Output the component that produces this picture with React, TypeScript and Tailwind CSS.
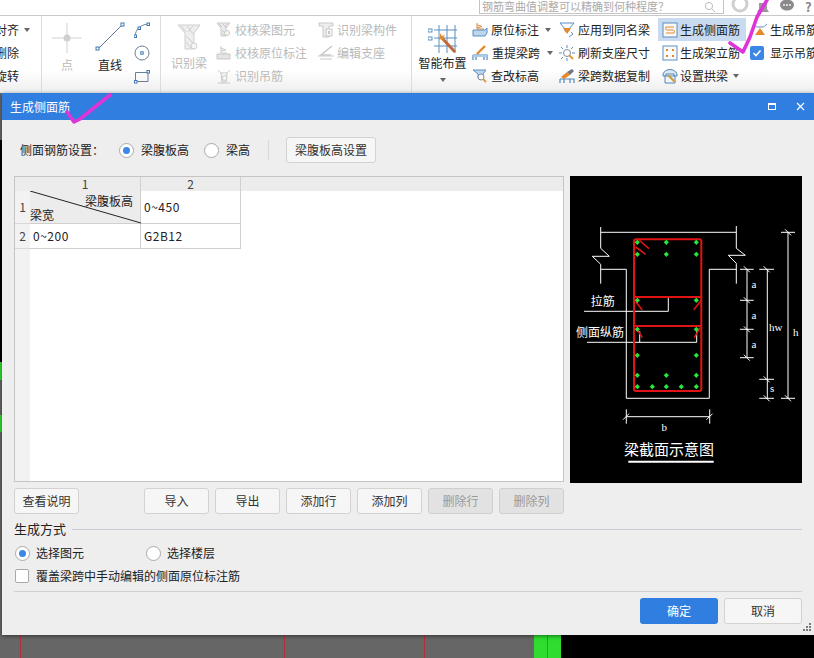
import type { ReactNode } from 'react'

function Caret({ className = '' }: { className?: string }) {
  return <span className={`inline-block w-0 h-0 border-x-[3.5px] border-x-transparent border-t-[4px] border-t-[#666] ${className}`} />
}

function Svg({ children, size = 16 }: { children: ReactNode; size?: number }) {
  return (
    <svg width={size} height={size} viewBox="0 0 16 16" fill="none" className="shrink-0">
      {children}
    </svg>
  )
}

// muted ribbon icons
const muted = '#c9c9c9'
const IconCheckBeam = () => (
  <Svg>
    <path d="M1 1h13l-4 5v8H5V6z" stroke={muted} fill="#ececec" />
    <path d="M3 2l3 3M7 2l3 4M11 2l-2 3M6 8l3 3M6 11l3 3" stroke={muted} />
    <circle cx="11" cy="11" r="2.5" stroke={muted} fill="#f6f6f6" />
  </Svg>
)
const IconCheckMark = () => (
  <Svg>
    <path d="M5 1v7h6M5 3l5 2-5 1" stroke={muted} />
    <path d="M1 9h13v5H1z" fill="#e4e4e4" stroke={muted} />
  </Svg>
)
const IconHanger = () => (
  <Svg>
    <path d="M2 2l3 3h6l3-3M5 5l1 9h4l1-9" stroke={muted} />
    <circle cx="8.5" cy="10" r="2.5" stroke={muted} fill="#f4f4f4" />
    <path d="M2 15h12" stroke={muted} />
  </Svg>
)
const IconBeamPart = () => (
  <Svg>
    <path d="M1 1h14v3h-4v11H5V4H1z" stroke={muted} fill="#eee" />
    <path d="M8 7h6v7H8z" stroke={muted} fill="#f6f6f6" />
    <path d="M10 9h2v3h-2z" fill={muted} />
  </Svg>
)
const IconSupport = () => (
  <Svg>
    <path d="M14 1L3 10h10" stroke={muted} strokeWidth="1.6" />
    <path d="M0 11h16M2 14h12" stroke={muted} />
  </Svg>
)

const IconOrig = () => (
  <Svg>
    <path d="M5 1v6h7M5 3l5 1.5L5 6" stroke="#d98b3a" />
    <path d="M1 8h12l2-2v5l-2 3H1z" fill="#bcd6ee" stroke="#5b8fc0" />
  </Svg>
)
const IconRespan = () => (
  <Svg>
    <path d="M13 1L5 9" stroke="#e58a2c" strokeWidth="2.4" />
    <path d="M1 10h14v5M1 10v5M4 10v5M12 10v5" stroke="#4f86bb" strokeWidth="1.2" />
    <path d="M1 10h14v2H1z" fill="#a9cbe8" />
  </Svg>
)
const IconElev = () => (
  <Svg>
    <path d="M1 2h13l-3 4v4H6V6z" fill="#bcd6ee" stroke="#5b8fc0" />
    <circle cx="9" cy="9" r="3" fill="#fff" stroke="#7a8fa5" />
    <path d="M11 11l3 3" stroke="#e0a030" strokeWidth="2" />
  </Svg>
)
const IconApply = () => (
  <Svg>
    <path d="M1 1h14l-5 6v2H6V7z" stroke="#5b8fc0" fill="#f7fbff" />
    <path d="M4 6h8l-4 6z" fill="#e58a2c" />
    <path d="M12 10l2 2-4 3" stroke="#5b8fc0" />
  </Svg>
)
const IconRefresh = () => (
  <Svg>
    <path d="M8 0v3M8 13v3M0 8h3M13 8h3M2 2l2 2M14 2l-2 2M2 14l2-2" stroke="#5b8fc0" />
    <circle cx="8" cy="8" r="3.5" fill="#fff" stroke="#7a8fa5" />
    <path d="M10 10l4 4" stroke="#e0a030" strokeWidth="2" />
  </Svg>
)
const IconCopy = () => (
  <Svg>
    <path d="M1 11h14v4M1 11v4M5 11v4M11 11v4" stroke="#4f86bb" strokeWidth="1.2" />
    <path d="M2 9l6-5 3 3-6 4z" fill="#e58a2c" />
    <path d="M8 4l5-3 2 2-4 4z" fill="#6b7785" />
  </Svg>
)
const IconSide = () => (
  <Svg>
    <rect x="1" y="1" width="14" height="14" fill="#f8f8f8" stroke="#5b8fc0" />
    <path d="M4 5h8M4 11h8M4 5c-1 2 0 3 1 3h6c1 0 2 1 1 3" stroke="#e58a2c" />
  </Svg>
)
const IconErect = () => (
  <Svg>
    <rect x="1" y="1" width="14" height="14" fill="#fbfbfb" stroke="#5b8fc0" />
    <path d="M4 4h2v2H4zM10 4h2v2h-2zM4 10h2v2H4zM10 10h2v2h-2z" fill="#e58a2c" />
  </Svg>
)
const IconArch = () => (
  <Svg>
    <path d="M1 6c2-6 12-6 14 0v2h-3V6H4v2H1z" fill="#dbe9f5" stroke="#4f86bb" />
    <path d="M3 8h10v7H3z" fill="#f3f6f9" stroke="#4f86bb" />
    <path d="M6 7l7 7" stroke="#c9a24e" strokeWidth="2.4" />
  </Svg>
)
const IconHangGen = () => (
  <Svg>
    <path d="M1 2c2 2 3 3 5 3h4c2 0 3-1 5-3" stroke="#5b8fc0" />
    <path d="M3 13l5-7 5 7z" fill="#e58a2c" />
  </Svg>
)

function RibbonRow({
  icon,
  label,
  grey,
  caret,
  iconGap = 'gap-[5px]',
}: {
  icon: ReactNode
  label: string
  grey?: boolean
  caret?: boolean
  iconGap?: string
}) {
  return (
    <div className={`flex items-center h-[23px] whitespace-nowrap ${iconGap} ${grey ? 'text-[#b9b9b9]' : 'text-[#222]'}`}>
      {icon}
      <span>{label}</span>
      {caret && <Caret className="ml-[3px]" />}
    </div>
  )
}

function Radio({ on }: { on?: boolean }) {
  return (
    <span className="w-[15px] h-[15px] rounded-full border border-[#a9a9a9] bg-white flex items-center justify-center shrink-0">
      {on && <span className="w-[7px] h-[7px] rounded-full bg-[#3c87e6]" />}
    </span>
  )
}

function Btn({ children, off, className = 'w-[65px]' }: { children: ReactNode; off?: boolean; className?: string }) {
  return (
    <div
      className={`h-[26px] rounded-[3px] border flex items-center justify-center text-xs ${className} ${
        off ? 'bg-[#e2e2e2] border-[#cfcfcf] text-[#999]' : 'bg-[#f6f6f6] border-[#d2d2d2] text-[#333]'
      }`}
    >
      {children}
    </div>
  )
}

function BeamDiagram() {
  const dots = [
    [67.3, 66.3], [96.3, 66.3], [126.3, 66.3], [67.3, 78.3], [96.3, 78.3], [126.3, 78.3],
    [67.3, 124.3], [126.3, 124.3], [67.3, 153.3], [126.3, 153.3], [67.3, 179.3], [126.3, 179.3],
    [67.3, 199.3], [96.3, 199.3], [126.3, 199.3], [67.3, 210.7], [82.3, 210.7], [96.3, 210.7],
    [111.3, 210.7], [126.3, 210.7],
  ]
  const ticks = [
    [170, 183.7, 93.3], [170, 183.7, 124.3], [170, 183.7, 153.3], [170, 183.7, 181.7],
    [189.3, 204, 93.3], [189.3, 204, 203.3], [189.3, 204, 222.3],
    [211, 225, 56.3], [211, 225, 222.3],
  ]
  return (
    <svg width="232" height="307" viewBox="0 0 232 307" className="block bg-black shrink-0">
      <g stroke="#fff" strokeWidth="1" fill="none">
        <path d="M30.7 56.3H166.3" />
        <path d="M30.7 51V72.3L39.3 80.3H22.3L30.7 88.3V107.7" />
        <path d="M166.3 50V72.3L175.3 79.3H158.3L166.3 87.3V107.7" />
        <path d="M166.3 93.3H139.3V222.3H56.3V93.3H30.7" />
        <path d="M14 135.3H98.3V121" />
        <path d="M17 166.3H126.7V155M69.7 166.3V155" />
        <path d="M177 93.3V181.7M197.3 93.3V222.3M218 56.3V222.3" />
        {ticks.map(([a, b, y]) => (
          <path key={`${a}-${y}`} d={`M${a} ${y}H${b}M${(a + b) / 2 - 3} ${y - 3}L${(a + b) / 2 + 3} ${y + 3}`} />
        ))}
        <path d="M56.3 233.3V247.7M139.7 233.3V247.7M56.3 240.7H139.7M53 243.7L59 237.7M136.5 243.7L142.5 237.7" />
      </g>
      <g stroke="#e01414" fill="none">
        <rect x="64" y="63.3" width="67.3" height="151.7" rx="2" strokeWidth="2" />
        <path d="M64 121H131.3M64 150H131.3" strokeWidth="2" />
        <path d="M69 64L79 72.7M65.7 71L75.7 78.3M65.7 125.7L72.3 134M131.3 124.3L123.7 133.7M66.7 152.3L72.3 161.7M130 151.7L124.3 161.7" strokeWidth="1.6" />
      </g>
      {dots.map(([x, y]) => (
        <path key={`${x}-${y}`} d={`M${x} ${y - 2.6}L${x + 2.6} ${y}L${x} ${y + 2.6}L${x - 2.6} ${y}Z`} fill="#27e63c" />
      ))}
      <g fill="#fff" fontSize="12">
        <text x="20.7" y="130">拉筋</text>
        <text x="6" y="161">侧面纵筋</text>
        <text x="54" y="279" fontSize="15">梁截面示意图</text>
      </g>
      <g fill="#fff" className="[font-family:'Liberation_Serif',serif]" fontSize="11">
        <text x="181.5" y="112">a</text>
        <text x="181.5" y="143">a</text>
        <text x="181.5" y="172">a</text>
        <text x="199" y="155">hw</text>
        <text x="200" y="216">s</text>
        <text x="223" y="160">h</text>
        <text x="91.5" y="255">b</text>
      </g>
      <path d="M58.3 285.7H143.7" stroke="#fff" strokeWidth="2" />
    </svg>
  )
}

export default function App() {
  return (
    <div className="relative w-[814px] h-[658px] overflow-hidden bg-[#666] text-xs [font-family:'Noto_Sans_CJK_SC','Liberation_Sans',sans-serif]">
      {/* top strip */}
      <div className="h-[16px] bg-white border-b border-[#c9c9c9] flex items-start justify-end">
        <div className="w-[245px] h-[14px] border border-t-0 border-[#c4c4c4] flex items-center justify-between pl-[2px] pr-[3px] text-[11px] text-[#aaa] mr-[90px] leading-none overflow-hidden">
          <span className="whitespace-nowrap">钢筋弯曲值调整可以精确到何种程度？</span>
          <svg width="12" height="12" viewBox="0 0 12 12" fill="none" stroke="#bbb" className="mr-[4px]">
            <circle cx="5" cy="5" r="3.6" />
            <path d="M8 8l3 3" />
          </svg>
        </div>
      </div>
      <div className="absolute top-0 left-[731px] flex items-start gap-[5px]">
        <svg width="78" height="14" viewBox="0 0 78 14">
          <circle cx="9" cy="4" r="7" fill="none" stroke="#cfcfcf" strokeWidth="3" />
          <path d="M26 12h12l-2-3V3h-8v6z" fill="#9a9a9a" />
          <ellipse cx="56" cy="5" rx="7" ry="5.5" fill="#8a8a8a" />
          <circle cx="53" cy="5" r="0.9" fill="#fff" />
          <circle cx="56" cy="5" r="0.9" fill="#fff" />
          <circle cx="59" cy="5" r="0.9" fill="#fff" />
        </svg>
        <span className="text-[13px] leading-[14px] text-[#888] font-bold -ml-[9px]">?</span>
      </div>

      {/* ribbon */}
      <div className="h-[77px] bg-gradient-to-b from-white from-70% to-[#eeeeee] flex overflow-hidden">
        <div className="w-[42px] shrink-0 border-r border-[#dcdcdc] pt-[2px] pl-0 overflow-hidden text-[#222]">
          <div className="h-[23px] flex items-center whitespace-nowrap -ml-[5px]">
            对齐
            <Caret className="ml-[5px]" />
          </div>
          <div className="h-[23px] flex items-center whitespace-nowrap -ml-[5px]">删除</div>
          <div className="h-[23px] flex items-center whitespace-nowrap -ml-[5px]">旋转</div>
        </div>

        <div className="w-[119px] shrink-0 border-r border-[#dcdcdc] flex">
          <div className="w-[48px] pl-[2px] pt-[6px] flex flex-col items-center text-[#b9b9b9]">
            <svg width="32" height="32" viewBox="0 0 32 32" fill="none" stroke="#d2d2d2">
              <path d="M16 1v30M1 16h30" />
              <circle cx="16" cy="16" r="3.5" fill="#cfcfcf" stroke="none" />
            </svg>
            <span className="mt-[3px]">点</span>
          </div>
          <div className="w-[40px] pt-[6px] flex flex-col items-center text-[#222]">
            <svg width="30" height="30" viewBox="0 0 30 30" fill="none" stroke="#5d7893">
              <path d="M3 27L27 3" />
              <rect x="1" y="25" width="3" height="3" fill="#fff" stroke="#3f78b0" />
              <rect x="26" y="1" width="3" height="3" fill="#fff" stroke="#3f78b0" />
            </svg>
            <span className="mt-[5px]">直线</span>
          </div>
          <div className="pt-[2px] pl-[4px] flex flex-col">
            <div className="h-[23px] flex items-center">
              <Svg>
                <path d="M1 14C2 7 6 3 14 2" stroke="#6d7f92" />
                <rect x="0" y="13" width="2.5" height="2.5" fill="#fff" stroke="#3f78b0" />
                <rect x="4" y="5" width="2.5" height="2.5" fill="#fff" stroke="#3f78b0" />
                <rect x="13" y="1" width="2.5" height="2.5" fill="#fff" stroke="#3f78b0" />
              </Svg>
            </div>
            <div className="h-[23px] flex items-center">
              <Svg>
                <circle cx="8" cy="8" r="7" stroke="#6d7f92" />
                <rect x="6.8" y="6.8" width="2.4" height="2.4" fill="#fff" stroke="#3f78b0" />
              </Svg>
            </div>
            <div className="h-[23px] flex items-center">
              <Svg>
                <path d="M1.5 4.5H14V13.5H1.5z" stroke="#6d7f92" />
                <rect x="0.5" y="12.5" width="2.5" height="2.5" fill="#fff" stroke="#3f78b0" />
                <rect x="13" y="2.5" width="2.5" height="2.5" fill="#fff" stroke="#3f78b0" />
              </Svg>
            </div>
          </div>
        </div>

        <div className="w-[251px] shrink-0 border-r border-[#dcdcdc] flex">
          <div className="w-[54px] pl-[2px] pt-[8px] flex flex-col items-center text-[#b9b9b9]">
            <svg width="24" height="28" viewBox="0 0 24 28" fill="none" stroke="#cfcfcf">
              <path d="M1 1h22l-6 8v16H8V9z" fill="#eeeeee" />
              <path d="M4 2l5 6M10 2l6 8M16 2l-5 6M9 12l7 7M9 18l5 6" />
              <circle cx="17" cy="22" r="3" fill="#f6f6f6" />
            </svg>
            <span className="mt-[3px] whitespace-nowrap">识别梁</span>
          </div>
          <div className="w-[103px] pl-[1px] pt-[2px] flex flex-col">
            <RibbonRow grey icon={<IconCheckBeam />} label="校核梁图元" iconGap="gap-[3px]" />
            <RibbonRow grey icon={<IconCheckMark />} label="校核原位标注" iconGap="gap-[3px]" />
            <RibbonRow grey icon={<IconHanger />} label="识别吊筋" iconGap="gap-[3px]" />
          </div>
          <div className="pt-[2px] flex flex-col">
            <RibbonRow grey icon={<IconBeamPart />} label="识别梁构件" iconGap="gap-[3px]" />
            <RibbonRow grey icon={<IconSupport />} label="编辑支座" iconGap="gap-[3px]" />
          </div>
        </div>

        <div className="flex shrink-0 text-[#222]">
          <div className="w-[60px] pl-[1px] pt-[8px] flex flex-col items-center">
            <svg width="30" height="30" viewBox="0 0 30 30" fill="none">
              <path d="M6 6H29M6 14H29M6 22H29M11 1V29M19 1V29M27 1V29" stroke="#5b8fc0" />
              <rect x="0" y="5" width="4" height="3" stroke="#5b8fc0" fill="#fff" />
              <rect x="0" y="13" width="4" height="3" stroke="#5b8fc0" fill="#fff" />
              <path d="M13 13L27 28" stroke="#c06a3a" strokeWidth="3" />
              <path d="M12 9l2 3 3-1-2 3 1 3-3-2-2 1 1-3z" fill="#e58a2c" />
            </svg>
            <span className="mt-[1px] whitespace-nowrap">智能布置</span>
            <Caret className="mt-[7px]" />
          </div>
          <div className="w-[87px] pt-[2px] flex flex-col">
            <RibbonRow icon={<IconOrig />} label="原位标注" iconGap="gap-[3px]" caret />
            <RibbonRow icon={<IconRespan />} label="重提梁跨" iconGap="gap-[4px]" caret />
            <RibbonRow icon={<IconElev />} label="查改标高" iconGap="gap-[3px]" />
          </div>
          <div className="w-[99px] pt-[2px] flex flex-col">
            <RibbonRow icon={<IconApply />} label="应用到同名梁" iconGap="gap-[3px]" />
            <RibbonRow icon={<IconRefresh />} label="刷新支座尺寸" iconGap="gap-[3px]" />
            <RibbonRow icon={<IconCopy />} label="梁跨数据复制" iconGap="gap-[3px]" />
          </div>
          <div className="w-[92px] pt-[2px] flex flex-col">
            <div className="w-[88px] h-[23px] bg-[#c9dbf0] pl-[4px] flex items-center gap-[2px] whitespace-nowrap">
              <IconSide />
              <span>生成侧面筋</span>
            </div>
            <div className="pl-[4px]">
              <RibbonRow icon={<IconErect />} label="生成架立筋" iconGap="gap-[2px]" />
              <RibbonRow icon={<IconArch />} label="设置拱梁" iconGap="gap-[2px]" caret />
            </div>
          </div>
          <div className="pt-[2px] flex flex-col">
            <div className="pl-[2px]">
              <RibbonRow icon={<IconHangGen />} label="生成吊筋" iconGap="gap-[2px]" />
            </div>
            <div className="flex items-center h-[23px] gap-[6px] whitespace-nowrap">
              <span className="w-[14px] h-[14px] rounded-[2px] bg-[#3c87e6] flex items-center justify-center">
                <svg width="10" height="10" viewBox="0 0 10 10" fill="none" stroke="#fff" strokeWidth="1.6">
                  <path d="M1.5 5l2.5 2.5 4.5-5" />
                </svg>
              </span>
              <span>显示吊筋</span>
            </div>
          </div>
        </div>
      </div>

      {/* drawing canvas behind the dialog */}
      <div className="absolute left-[534px] right-0 top-[630px] bottom-0 flex">
        <div className="w-[27px] bg-[#2fdc2f]" />
        <div className="flex-1 bg-black" />
      </div>
      <div className="absolute left-[20px] top-[630px] bottom-0 w-px bg-[#b03040]" />
      <div className="absolute left-[284px] top-[630px] bottom-0 w-px bg-[#b03040]" />
      <div className="absolute left-[424px] top-[630px] bottom-0 w-px bg-[#b03040]" />
      <div className="absolute left-[547px] top-[630px] bottom-0 w-px bg-[#b06020]" />
      <div className="absolute left-0 w-[2px] top-[140px] h-[222px] bg-black" />
      <div className="absolute left-0 w-[2px] top-[362px] h-[18px] bg-[#2fdc2f]" />
      <div className="absolute left-0 w-[2px] top-[415px] h-[17px] bg-[#2fdc2f]" />

      {/* dialog */}
      <div className="absolute left-[2px] top-[93px] w-[812px] h-[542px] bg-[#eeeeee] shadow-[0_1px_4px_rgba(0,0,0,0.5)] flex flex-col">
        <div className="h-[27px] shrink-0 bg-[#2f7ee0] flex items-center justify-between pl-[8px] pr-[9px] text-white">
          <span>生成侧面筋</span>
          <div className="flex items-center gap-[20px]">
            <span className="w-[8px] h-[7px] border border-white border-t-2" />
            <svg width="9" height="9" viewBox="0 0 9 9" stroke="#fff" strokeWidth="1.2">
              <path d="M1 1l7 7M8 1l-7 7" />
            </svg>
          </div>
        </div>

        <div className="flex-1 pl-[12px] pr-[12px] relative">
          <div className="h-[56px] flex items-center pl-[6px] pt-[4px] text-[#222]">
            <span className="w-[99px]">侧面钢筋设置：</span>
            <Radio on />
            <span className="ml-[7px] w-[56px]">梁腹板高</span>
            <span className="ml-[7px]">
              <Radio />
            </span>
            <span className="ml-[7px] w-[24px]">梁高</span>
            <span className="ml-[18px] w-px h-[20px] bg-[#d8d8d8]" />
            <Btn className="w-[90px] ml-[17px]">梁腹板高设置</Btn>
          </div>

          <div className="flex gap-[6px] h-[306px]">
            <div className="w-[550px] border border-[#c4c4c4] bg-white grid grid-cols-[15px_111px_100px_1fr] grid-rows-[14px_33px_25px_1fr] text-[#222]">
              <div className="bg-[#ececec]" />
              <div className="bg-[#ececec] border-r border-[#d0d0d0] text-center leading-[14px] text-[#444]">1</div>
              <div className="bg-[#ececec] border-r border-[#d0d0d0] text-center leading-[14px] text-[#444]">2</div>
              <div className="bg-[#ececec]" />

              <div className="bg-[#f2f2f2] border-b border-[#d8d8d8] flex items-center justify-center text-[#444]">1</div>
              <div className="relative bg-[#ececec] border-r border-b border-[#d0d0d0]">
                <svg width="111" height="33" viewBox="0 0 111 33" className="absolute inset-0" stroke="#222">
                  <path d="M0 0L111 32" />
                </svg>
                <span className="absolute right-[7px] top-[2px]">梁腹板高</span>
                <span className="absolute left-0 bottom-0 leading-[16px]">梁宽</span>
              </div>
              <div className="border-r border-b border-[#d0d0d0] flex items-center pl-[3px] tracking-[0.5px]">0~450</div>
              <div />

              <div className="bg-[#f2f2f2] border-b border-[#d8d8d8] flex items-center justify-center text-[#444]">2</div>
              <div className="border-r border-b border-[#d0d0d0] flex items-center pl-[3px] tracking-[0.5px]">0~200</div>
              <div className="border-r border-b border-[#d0d0d0] flex items-center pl-[3px] tracking-[0.5px]">G2B12</div>
              <div />

              <div className="bg-[#f2f2f2]" />
              <div className="col-span-3" />
            </div>
            <BeamDiagram />
          </div>

          <div className="flex mt-[6px]">
            <Btn>查看说明</Btn>
            <div className="flex gap-[6px] ml-[65px]">
              <Btn>导入</Btn>
              <Btn>导出</Btn>
              <Btn>添加行</Btn>
              <Btn>添加列</Btn>
              <Btn off>删除行</Btn>
              <Btn off>删除列</Btn>
            </div>
          </div>

          <div className="flex items-center gap-[6px] mt-[6px] h-[18px] text-[#222] text-[13px]">
            <span>生成方式</span>
            <span className="flex-1 h-px bg-[#c9c9d2]" />
          </div>

          <div className="flex items-center h-[20px] mt-[5px] text-[#222] pl-[1px]">
            <Radio on />
            <span className="ml-[6px] w-[110px]">选择图元</span>
            <Radio />
            <span className="ml-[6px]">选择楼层</span>
          </div>
          <div className="flex items-center h-[18px] mt-[4px] text-[#222] pl-[1px]">
            <span className="w-[14px] h-[14px] rounded-[2px] border border-[#a9a9a9] bg-white" />
            <span className="ml-[7px]">覆盖梁跨中手动编辑的侧面原位标注筋</span>
          </div>

          <div className="h-px bg-[#cfcfd4] mt-[6px]" />

          <div className="flex justify-end gap-[6px] mt-[6px]">
            <div className="w-[78px] h-[26px] rounded-[3px] bg-[#2f7ee0] text-white flex items-center justify-center">确定</div>
            <Btn className="w-[78px]">取消</Btn>
          </div>

          <svg width="9" height="9" viewBox="0 0 9 9" fill="#777" className="absolute right-[2px] bottom-[3px]">
            <path d="M6 0h2v2H6zM3 3h2v2H3zM6 3h2v2H6zM0 6h2v2H0zM3 6h2v2H3zM6 6h2v2H6z" />
          </svg>
        </div>
      </div>

      {/* hand-drawn marks on the screenshot */}
      <svg width="814" height="658" viewBox="0 0 814 658" fill="none" stroke="#dd35d8" strokeWidth="3.6" strokeLinecap="round" strokeLinejoin="round" className="absolute inset-0 pointer-events-none">
        <path d="M110 95L100 103L80 119L74 122L67 112" />
        <path d="M767 0L757 17L750 37L743 52L730 43" />
      </svg>
    </div>
  )
}
